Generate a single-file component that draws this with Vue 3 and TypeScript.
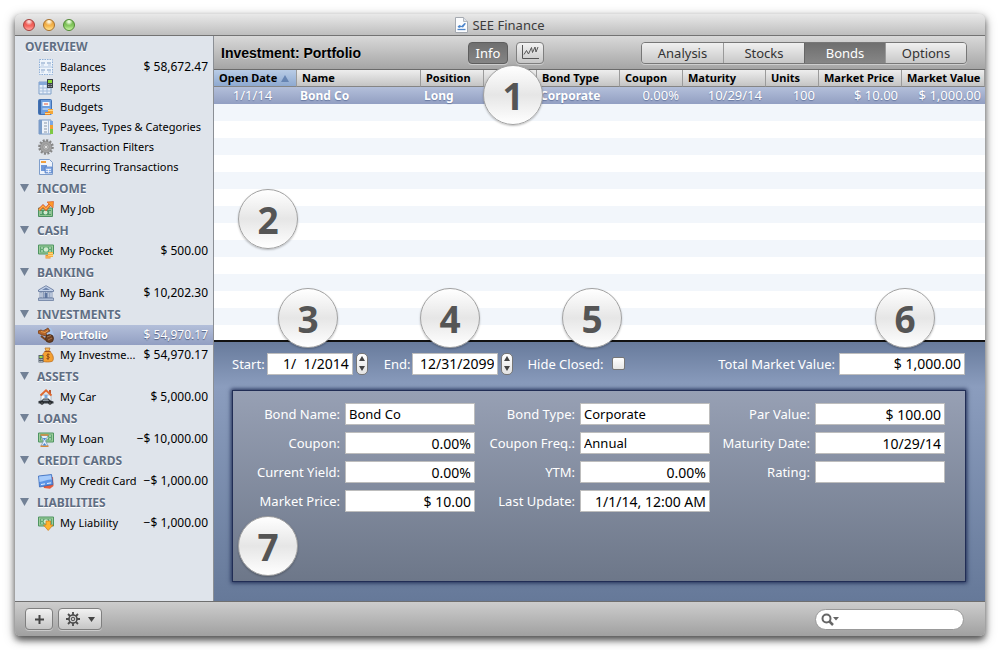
<script setup lang="ts">
import { ref } from 'vue'

interface Item { id: string; name: string; value?: string; icon: string }
interface Section { title: string; items: Item[] }
interface Field { id: string; label: string; value: string; left?: boolean }

const sections: Section[] = [
  { title: 'OVERVIEW', items: [
    { id: 'balances', name: 'Balances', value: '$ 58,672.47', icon: 'balances' },
    { id: 'reports', name: 'Reports', icon: 'reports' },
    { id: 'budgets', name: 'Budgets', icon: 'budgets' },
    { id: 'payees', name: 'Payees, Types & Categories', icon: 'payees' },
    { id: 'filters', name: 'Transaction Filters', icon: 'gear' },
    { id: 'recurring', name: 'Recurring Transactions', icon: 'recurring' },
  ] },
  { title: 'INCOME', items: [{ id: 'job', name: 'My Job', icon: 'job' }] },
  { title: 'CASH', items: [{ id: 'pocket', name: 'My Pocket', value: '$ 500.00', icon: 'pocket' }] },
  { title: 'BANKING', items: [{ id: 'bank', name: 'My Bank', value: '$ 10,202.30', icon: 'bank' }] },
  { title: 'INVESTMENTS', items: [
    { id: 'portfolio', name: 'Portfolio', value: '$ 54,970.17', icon: 'portfolio' },
    { id: 'investment', name: 'My Investme...', value: '$ 54,970.17', icon: 'investment' },
  ] },
  { title: 'ASSETS', items: [{ id: 'car', name: 'My Car', value: '$ 5,000.00', icon: 'car' }] },
  { title: 'LOANS', items: [{ id: 'loan', name: 'My Loan', value: '−$ 10,000.00', icon: 'loan' }] },
  { title: 'CREDIT CARDS', items: [{ id: 'credit', name: 'My Credit Card', value: '−$ 1,000.00', icon: 'credit' }] },
  { title: 'LIABILITIES', items: [{ id: 'liability', name: 'My Liability', value: '−$ 1,000.00', icon: 'liability' }] },
]

const tabs = ['Analysis', 'Stocks', 'Bonds', 'Options']
const columns = ['Open Date', 'Name', 'Position', '', 'Bond Type', 'Coupon', 'Maturity', 'Units', 'Market Price', 'Market Value']

const fields: Field[] = [
  { id: 'bond-name', label: 'Bond Name:', value: 'Bond Co', left: true },
  { id: 'bond-type', label: 'Bond Type:', value: 'Corporate', left: true },
  { id: 'par-value', label: 'Par Value:', value: '$ 100.00' },
  { id: 'coupon', label: 'Coupon:', value: '0.00%' },
  { id: 'coupon-freq', label: 'Coupon Freq.:', value: 'Annual', left: true },
  { id: 'maturity-date', label: 'Maturity Date:', value: '10/29/14' },
  { id: 'current-yield', label: 'Current Yield:', value: '0.00%' },
  { id: 'ytm', label: 'YTM:', value: '0.00%' },
  { id: 'rating', label: 'Rating:', value: '' },
  { id: 'market-price', label: 'Market Price:', value: '$ 10.00' },
  { id: 'last-update', label: 'Last Update:', value: '1/1/14, 12:00 AM' },
]

const selected = ref('portfolio')
const tab = ref('Bonds')
const start = ref('1/  1/2014')
const end = ref('12/31/2099')
const hideClosed = ref(false)
const query = ref('')
</script>

<template>
  <svg class="defs" aria-hidden="true">
    <symbol id="i-balances" viewBox="0 0 16 16">
      <path d="M1.5 .5h13v15h-13z" fill="#eef4fb" stroke="#8eb0d8" stroke-dasharray="1.5 1" />
      <path d="M3 4h4M9 4h4M3 11h4M9 11h4" stroke="#7f9cc4" stroke-width="1.2" />
      <path d="M3 6h3M10 6h3M3 13h3M10 13h3M2 8h12" stroke="#b4c8e2" />
    </symbol>
    <symbol id="i-reports" viewBox="0 0 16 16">
      <path d="M1 3h12v12H1z" fill="#e8f0fa" stroke="#7f9fc8" />
      <path d="M1 3h12v3H1z" fill="#86a9d8" />
      <path d="M1.500 9h11M1.500 12h11M5 6v9M9 6v9" stroke="#a3bcdc" />
      <path d="M9 0h6v9H9z" fill="#3c4248" /><path d="M10 1h4v3h-4z" fill="#8fdc3a" />
      <path d="M10 5.500h4M10 7.500h4" stroke="#9aa0a6" stroke-dasharray="1 .5" />
    </symbol>
    <symbol id="i-budgets" viewBox="0 0 16 16">
      <rect x=".5" y=".5" width="13" height="15" rx="1" fill="#6f9fe0" stroke="#4272b4" />
      <path d="M1 1h2v14H1z" fill="#3c68a8" /><path d="M4.500 3h7v4h-7z" fill="#f4f7fb" />
      <path d="M6 5h4" stroke="#e2583c" /><path d="M4.500 9h7v2h-7z" fill="#a9c7f0" />
      <path d="M10 10h5v5h-5z" fill="#f3a73a" /><path d="M7 13h5v3H7z" fill="#e8872a" />
      <path d="M10 11.500h5M7 14.500h5" stroke="#ffd98a" />
    </symbol>
    <symbol id="i-payees" viewBox="0 0 16 16">
      <path d="M1 1h12v14H1z" fill="#eef3fa" stroke="#7c9bc6" /><path d="M1 1h3v14H1z" fill="#7a9cc9" />
      <path d="M6 4h3M6 7h3M6 10h3M6 13h3" stroke="#8a97a8" stroke-width="1.2" /><path d="M10.500 1v14" stroke="#a9bdd8" />
      <path d="M12 2h3v4h-3z" fill="#79a7e4" /><path d="M12 6h3v4h-3z" fill="#f3a030" /><path d="M12 10h3v5h-3z" fill="#7ec844" />
    </symbol>
    <symbol id="i-gear" viewBox="0 0 16 16">
      <circle cx="8" cy="8" r="6.600" fill="none" stroke="#858585" stroke-width="2.400" stroke-dasharray="2 1.450" />
      <circle cx="8" cy="8" r="5.800" fill="#a2a2a2" stroke="#7c7c7c" stroke-width=".6" />
      <circle cx="8" cy="8" r="3.200" fill="#b9b9b9" stroke="#8b8b8b" stroke-width=".7" />
      <circle cx="8" cy="8" r="1.500" fill="#f3f3f3" stroke="#777" stroke-width=".5" />
    </symbol>
    <symbol id="i-recurring" viewBox="0 0 16 16">
      <path d="M1.500 .5h10l3 3v12h-13z" fill="#eef3fb" stroke="#7f9ecb" />
      <path d="M3 2h5v2H3z" fill="#f0a040" /><path d="M3 6h6v6H3z" fill="#6e97d8" /><path d="M7 8h7v6H7z" fill="#8eb1e8" stroke="#4d7ac2" stroke-width=".7" />
      <path d="M8 10.500h5M8 12.500h5M10.500 10v4" stroke="#fff" stroke-width=".7" />
    </symbol>
    <symbol id="i-note" viewBox="0 0 16 16">
      <path d="M.5 2h15v9H.5z" fill="#9fce9b" stroke="#4e9462" /><path d="M2 3.500h12v6H2z" fill="#5fa772" />
      <circle cx="8" cy="6.500" r="2.300" fill="#d3ebd0" /><path d="M3 5h2M3 8h2M11 5h2M11 8h2" stroke="#d8efd4" />
    </symbol>
    <symbol id="i-job" viewBox="0 0 16 16">
      <path d="M.5 7h14v8.500H.5z" fill="#8fc48f" stroke="#4d9162" /><path d="M2 9h11v5H2z" fill="#4f9a66" />
      <circle cx="7.500" cy="11.500" r="2" fill="#d3ebd0" /><path d="M3 10v3M12 10v3" stroke="#d8efd4" />
      <path d="M1 9l4-4 3 3 4.500-5" fill="none" stroke="#d7512b" stroke-width="3" /><path d="M1 9l4-4 3 3 4.500-5" fill="none" stroke="#ffb340" stroke-width="1.400" />
      <path d="M9 1l6.500-.5L15 7z" fill="#ff9a2c" stroke="#d9602a" stroke-width=".7" />
    </symbol>
    <symbol id="i-pocket" viewBox="0 0 16 16">
      <use href="#i-note" /><path d="M10 9h5v5h-5z" fill="#f6b13d" /><path d="M7.500 12h5v3.500h-5z" fill="#ee8f2b" /><path d="M10 10.500h5M10 12.500h5M7.500 14h5" stroke="#ffdc8c" stroke-width=".8" />
    </symbol>
    <symbol id="i-bank" viewBox="0 0 16 16">
      <path d="M8 .7L15.500 5v1.500H.5V5z" fill="#c5d3e9" stroke="#5d7197" stroke-width=".8" /><path d="M8 2.500L12 5H4z" fill="#6f86ae" />
      <path d="M2 7h2v6H2zM5.500 7h2v6h-2zM9 7h2v6H9zM12 7h2v6h-2z" fill="#dfe8f5" stroke="#6b7fa4" stroke-width=".7" />
      <path d="M6.500 8h3v5.500h-3z" fill="#5f769f" /><path d="M.5 13h15v2.500H.5z" fill="#aebdd6" stroke="#5d7197" stroke-width=".7" />
    </symbol>
    <symbol id="i-portfolio" viewBox="0 0 16 16">
      <path d="M6 1l7 0 3 7-3 3-6-4z" fill="#a9c3e8" />
      <path d="M0 4l3-1 2 1 5-3 2 3-4 2 1 3-5-1-4-2z" fill="#b4652a" stroke="#6a3714" stroke-width=".7" /><path d="M3 4.500l4 1 3-2" stroke="#e59a4c" fill="none" />
      <path d="M3 9l5 4" stroke="#7a431b" stroke-width="2" /><ellipse cx="11.500" cy="11.500" rx="4" ry="4" fill="#6b3f22" stroke="#3f220e" stroke-width=".7" /><path d="M9 10l4-1.500M10 13l4-2" stroke="#a87347" />
    </symbol>
    <symbol id="i-investment" viewBox="0 0 16 16">
      <path d="M7 1h5l-1 3h-3z" fill="#f6bd62" stroke="#b66a1d" stroke-width=".7" /><path d="M7 4.500h5c3 3 4 6 3 9-1 2-10 2-11 0-.5-3 0-6 3-9z" fill="#f3a033" stroke="#b9691b" stroke-width=".7" />
      <path d="M6.500 4.500h6" stroke="#a04c1b" /><path d="M11.500 7.500c-3-1-3.500 1.800-1.500 2s1.800 2.600-1.500 2M10 6.500v6.500" fill="none" stroke="#8b4513" stroke-width=".9" />
      <path d="M.5 8h5v7.500H.5z" fill="#55606c" /><path d="M1.500 9h3v2h-3z" fill="#9bdb48" /><path d="M1.500 12.500h3M1.500 14.500h3" stroke="#e5e8eb" stroke-dasharray=".8 .5" />
    </symbol>
    <symbol id="i-car" viewBox="0 0 16 16">
      <path d="M3 6h10v6H3z" fill="#f5f7fa" stroke="#99a3b0" stroke-width=".7" /><path d="M11 1h2v4h-2z" fill="#b75a35" />
      <path d="M2.500 6.500L8 1.300l5.500 5.200" fill="none" stroke="#e0682f" stroke-width="1.800" /><path d="M6.500 6h3v3h-3z" fill="#76a5dc" />
      <path d="M.5 12l3-.5 2-2h5l2 2 3 1v2H.5z" fill="#33383e" /><path d="M5.500 10.500h4.500l1 1.200H4.500z" fill="#aeb8c4" /><circle cx="4" cy="14" r="1.700" fill="#15181b" /><circle cx="12" cy="14" r="1.700" fill="#15181b" /><path d="M3.500 14h1M11.500 14h1" stroke="#ccc" />
    </symbol>
    <symbol id="i-loan" viewBox="0 0 16 16">
      <use href="#i-note" /><path d="M3 4.500h7L7.500 10l2.500 5H3l2.500-5z" fill="#e5f0fb" stroke="#6e8fb8" stroke-width=".7" />
      <path d="M2.500 4h8M2.500 15.300h8" stroke="#d78a3a" stroke-width="1.400" /><path d="M4.800 7h3.400L6.500 9.500zM4.500 14.500l2-2.500 2 2.500z" fill="#4b8bd3" />
    </symbol>
    <symbol id="i-credit" viewBox="0 0 16 16">
      <path d="M3 6l12-2 .5 9L12 15.700 6 15z" fill="#e65c3b" /><path d="M.5 3l13-1.500 1.500 10L1.500 14z" fill="#5c94e6" stroke="#2f62b5" stroke-width=".7" />
      <path d="M1 3.500l12-1.300.7 4.500C9 6 5 9 1.500 9z" fill="#a6cbfb" /><path d="M3 11.500l4-.6M9 10.500l4-.6" stroke="#e8f2ff" />
    </symbol>
    <symbol id="i-liability" viewBox="0 0 16 16">
      <use href="#i-note" /><path d="M8 6h4.500v4H15l-4.800 5.500L5.500 10H8z" fill="#ffb42e" stroke="#cf7a1c" stroke-width=".7" />
    </symbol>
  </svg>

  <div class="desk">
    <div class="window">
      <header class="titlebar">
        <div class="lights">
          <button class="light red" type="button" aria-label="Close"></button>
          <button class="light amber" type="button" aria-label="Minimize"></button>
          <button class="light green" type="button" aria-label="Zoom"></button>
        </div>
        <svg class="doc" viewBox="0 0 13 16" aria-hidden="true">
          <path d="M.5 .5h8l4 4v11H.5z" fill="#fbfcfe" stroke="#a4a9b0" /><path d="M8.500 .5v4h4" fill="#dde2ea" stroke="#a4a9b0" stroke-width=".8" />
          <path d="M2.500 9.500l2-1.500 2 1 3-3 1.500.5-3 4-2-.5-2 1z" fill="#4d86cc" /><path d="M2.500 12.500h8" stroke="#4d86cc" stroke-width="1.300" />
        </svg>
        <h1>SEE Finance</h1>
      </header>

      <div class="body">
        <nav class="sidebar">
          <section v-for="(s, i) in sections" :key="s.title">
            <h2 :class="{ first: i === 0 }">
              <svg v-if="i > 0" class="tri" viewBox="0 0 9 8" aria-hidden="true"><path d="M0 0h9L4.500 8z" fill="#728196" /></svg>
              {{ s.title }}
            </h2>
            <button v-for="it in s.items" :key="it.id" type="button" class="item" :class="{ on: selected === it.id }" @click="selected = it.id">
              <svg class="icon" aria-hidden="true"><use :href="'#i-' + it.icon" /></svg>
              <span class="name">{{ it.name }}</span>
              <span v-if="it.value" class="amount">{{ it.value }}</span>
            </button>
          </section>
        </nav>

        <main class="main">
          <div class="toolbar">
            <h2>Investment: Portfolio</h2>
            <div class="modes">
              <button type="button" class="btn pressed">Info</button>
              <button type="button" class="btn chart" aria-label="Chart">
                <svg viewBox="0 0 18 15" aria-hidden="true"><path d="M1.500 0v13.500H18" fill="none" stroke="#555" /><path d="M3 9.500l2.500-4 2 3.500 3-6.500 1 5 2.500-5.500 1 5L17 2" fill="none" stroke="#555" /></svg>
              </button>
            </div>
            <div class="segments">
              <button v-for="t in tabs" :key="t" type="button" :class="{ on: tab === t }" @click="tab = t">{{ t }}</button>
            </div>
          </div>

          <div class="list">
            <table>
              <colgroup>
                <col class="c83"><col><col class="c63"><col class="c53"><col class="c83"><col class="c63"><col class="c83"><col class="c53"><col class="c83"><col class="c83">
              </colgroup>
              <thead>
                <tr>
                  <th v-for="(c, i) in columns" :key="i" scope="col" :class="{ sorted: i === 0 }">{{ c }}<svg v-if="i === 0" viewBox="0 0 8 7" aria-hidden="true"><path d="M0 7h8L4 0z" fill="#6785b3" /></svg></th>
                </tr>
              </thead>
              <tbody>
                <tr>
                  <td class="center">1/1/14</td><td class="strong">Bond Co</td><td class="strong">Long</td><td></td><td class="strong">Corporate</td>
                  <td class="num">0.00%</td><td class="num">10/29/14</td><td class="num">100</td><td class="num">$ 10.00</td><td class="num">$ 1,000.00</td>
                </tr>
              </tbody>
            </table>
          </div>

          <div class="details">
            <div class="filters">
              <label for="start">Start:</label>
              <input id="start" v-model="start" class="date" type="text">
              <span class="stepper">
                <button type="button" aria-label="Later start"><svg viewBox="0 0 6 5"><path d="M0 5h6L3 0z" /></svg></button>
                <button type="button" aria-label="Earlier start"><svg viewBox="0 0 6 5"><path d="M0 0h6L3 5z" /></svg></button>
              </span>
              <label for="end" class="end">End:</label>
              <input id="end" v-model="end" class="date" type="text">
              <span class="stepper">
                <button type="button" aria-label="Later end"><svg viewBox="0 0 6 5"><path d="M0 5h6L3 0z" /></svg></button>
                <button type="button" aria-label="Earlier end"><svg viewBox="0 0 6 5"><path d="M0 0h6L3 5z" /></svg></button>
              </span>
              <label for="hide" class="hide">Hide Closed:</label>
              <input id="hide" v-model="hideClosed" type="checkbox">
              <label for="total" class="total-label">Total Market Value:</label>
              <input id="total" class="total" type="text" value="$ 1,000.00" readonly>
            </div>
            <form class="panel" @submit.prevent>
              <template v-for="f in fields" :key="f.id">
                <label :for="f.id">{{ f.label }}</label>
                <input :id="f.id" type="text" :class="{ left: f.left }" :value="f.value">
              </template>
            </form>
          </div>
        </main>
      </div>

      <footer class="bottombar">
        <button type="button" class="btn plus" aria-label="Add"><svg viewBox="0 0 9 9"><path d="M4.500 0v9M0 4.500h9" stroke="#444" stroke-width="2" /></svg></button>
        <button type="button" class="btn action" aria-label="Actions">
          <svg class="cog" viewBox="0 0 14 14"><g stroke="#4c4c4c" stroke-width="1.800"><path d="M7 0v14M0 7h14M2 2l10 10M12 2L2 12" /></g><circle cx="7" cy="7" r="4" fill="#dcdcdc" stroke="#4c4c4c" stroke-width="1.600" /><circle cx="7" cy="7" r="1.800" fill="#c8c8c8" stroke="#4c4c4c" /></svg>
          <svg class="down" viewBox="0 0 7 5"><path d="M0 0h7L3.500 5z" fill="#444" /></svg>
        </button>
        <div class="search">
          <svg viewBox="0 0 18 13" aria-hidden="true"><circle cx="5.500" cy="5.500" r="4" fill="none" stroke="#666" stroke-width="2" /><path d="M8.500 8.500l3.500 3.500" stroke="#666" stroke-width="2.500" /><path d="M12 4h6l-3 3.500z" fill="#666" /></svg>
          <input v-model="query" type="search" aria-label="Search">
        </div>
      </footer>

      <span class="badge b1">1</span>
      <span class="badge b2">2</span>
      <span class="badge b3">3</span>
      <span class="badge b4">4</span>
      <span class="badge b5">5</span>
      <span class="badge b6">6</span>
      <span class="badge b7">7</span>
    </div>
  </div>
</template>

<style>
body { margin: 0; background: #fff; }
</style>

<style scoped>
.defs { display: none; }
.desk { box-sizing: border-box; min-height: 100vh; padding: 14px 15px; display: flex; font-family: "Noto Sans", "Open Sans", sans-serif; font-size: 12px; color: #000; }
.window { position: relative; flex: 1; min-width: 0; display: flex; flex-direction: column; border-radius: 5px; box-shadow: 0 4px 6px rgba(0, 0, 0, .55), 0 3px 12px rgba(0, 0, 0, .35); background: #ccc; }
button, input { font: inherit; color: inherit; box-sizing: border-box; margin: 0; padding: 0; border: 0; outline: 0; }
h1, h2 { margin: 0; font-weight: normal; }

.titlebar { position: relative; height: 22px; box-sizing: border-box; display: flex; align-items: center; justify-content: center; gap: 4px; border-bottom: 1px solid #737373; border-radius: 5px 5px 0 0; background: linear-gradient(#e9e9e9, #bebebe); }
.titlebar h1 { font-size: 13px; line-height: 20px; color: #3c3c3c; }
.doc { width: 13px; height: 16px; }
.lights { position: absolute; left: 8px; top: 5px; display: flex; gap: 8px; }
.light { width: 12px; height: 12px; border-radius: 50%; border: 1px solid; }
.red { border-color: #a5403c; background: radial-gradient(circle at 50% 15%, #fbd5d2 10%, transparent 40%), linear-gradient(#e0504b, #f6665f 60%, #ffaaa5); }
.amber { border-color: #a8702a; background: radial-gradient(circle at 50% 15%, #fff3d5 10%, transparent 40%), linear-gradient(#e29a35, #f6b74f 60%, #ffe695); }
.green { border-color: #4f8a33; background: radial-gradient(circle at 50% 15%, #e8fbd8 10%, transparent 40%), linear-gradient(#66ad45, #8acb63 60%, #c9f5a5); }

.body { flex: 1; display: flex; min-height: 0; }
.sidebar { width: 199px; flex: none; box-sizing: border-box; background: #dfe4eb; border-right: 1px solid #8b8f95; }
.sidebar h2 { display: flex; align-items: center; height: 22px; padding-left: 5px; gap: 8px; font-size: 12px; font-weight: bold; color: #5f6e83; text-shadow: 0 1px 0 #fff; }
.sidebar h2.first { height: 21px; padding-left: 10px; }
.tri { width: 9px; height: 8px; }
.item { display: flex; align-items: center; width: 100%; height: 20px; padding: 0 5px 0 23px; background: none; white-space: nowrap; text-align: left; line-height: 16px; }
.item.on { color: #fff; background: linear-gradient(#b3bfda, #929fc2); text-shadow: 0 1px 1px #4d5a7c; }
.item.on .name { font-weight: bold; }
.icon { width: 16px; height: 16px; flex: none; margin-right: 6px; }
.name { font-size: 11px; }
.amount { margin-left: auto; font-size: 12px; }

.main { flex: 1; min-width: 0; display: flex; flex-direction: column; }
.toolbar { display: flex; justify-content: space-between; align-items: center; height: 34px; box-sizing: border-box; padding: 0 18px 0 7px; background: linear-gradient(#d9d9d9, #a5a5a5); border-bottom: 1px solid #6b6b6b; }
.toolbar h2 { font-family: "Liberation Sans", Arial, sans-serif; font-size: 14px; font-weight: bold; white-space: nowrap; text-shadow: 0 1px 0 #ddd; }
.modes { display: flex; gap: 8px; margin-left: 10px; }
.btn { display: flex; align-items: center; justify-content: center; height: 22px; border: 1px solid #7f7f7f; border-radius: 4px; background: linear-gradient(#f2f2f2, #c6c6c6); box-shadow: 0 1px 0 rgba(255, 255, 255, .4); }
.pressed { width: 40px; font-size: 13px; color: #fff; background: linear-gradient(#6f6f6f, #858585); border-color: #5e5e5e; }
.chart { width: 28px; }
.chart svg { width: 18px; height: 15px; }
.segments { display: flex; border: 1px solid #777; border-radius: 4px; overflow: hidden; box-shadow: 0 1px 0 rgba(255, 255, 255, .4); }
.segments button { width: 81px; height: 20px; font-size: 13px; line-height: 18px; color: #333; background: linear-gradient(#f0f0f0, #c8c8c8); }
.segments button + button { border-left: 1px solid #999; }
.segments button.on { color: #fff; background: linear-gradient(#6f6f6f, #868686); border-color: #666; }

.list { flex: 1; background: repeating-linear-gradient(#f2f6fb 0 17px, #fff 17px 34px); }
table { width: 100%; table-layout: fixed; border-collapse: separate; border-spacing: 0; }
.c83 { width: 83px; }
.c63 { width: 63px; }
.c53 { width: 53px; }
th { box-sizing: border-box; height: 17px; padding: 0 0 0 5px; font-size: 11px; line-height: 16px; font-weight: bold; text-align: left; white-space: nowrap; border-right: 1px solid #9b9b9b; border-bottom: 1px solid #858585; background: linear-gradient(#eee, #c4c4c4); }
th.sorted { background: linear-gradient(#b9cce6, #8ea9d0); }
th svg { width: 8px; height: 7px; margin-left: 4px; }
td { box-sizing: border-box; height: 17px; padding: 0 4px; font-size: 13px; line-height: 17px; white-space: nowrap; color: #fff; background: linear-gradient(#b3bfda, #929fc2); text-shadow: 0 1px 1px #6878a0; }
td.center { text-align: center; padding-right: 10px; }
td.strong { font-size: 12px; font-weight: bold; padding-left: 3px; }
td.num { text-align: right; }

.details { box-sizing: border-box; padding: 10px 20px 20px 18px; border-top: 2px solid #111; background: linear-gradient(#687b9c, #8b9dbe 45px, #667999); color: #fff; font-size: 13px; }
.details label { white-space: nowrap; }
.filters { display: flex; align-items: center; height: 23px; }
.details input[type="text"] { color: #000; background: #fff; border: 1px solid #bdbdbd; height: 22px; padding: 0 3px; text-align: right; font-size: 14px; min-width: 0; }
.details input[type="text"].left { text-align: left; font-size: 13px; }
.filters .date { width: 86px; margin-left: 2px; white-space: pre; }
.stepper { display: flex; flex-direction: column; width: 12px; height: 22px; margin-left: 3px; box-sizing: border-box; border: 1px solid #777; border-radius: 5px; overflow: hidden; background: linear-gradient(#fff, #e3e3e3); }
.stepper button { flex: 1; background: none; display: flex; align-items: center; justify-content: center; }
.stepper svg { width: 6px; height: 5px; fill: #444; }
.filters .end { margin-left: 16px; }
.filters .hide { margin-left: 14px; }
input[type="checkbox"] { appearance: none; width: 13px; height: 13px; margin-left: 8px; border: 1px solid #777; border-radius: 2px; background: linear-gradient(#fff, #e6e6e6); }
.total-label { margin-left: auto; }
.details .total { width: 126px; margin-left: 4px; }
.panel { display: grid; grid-template-columns: 1fr 130px 1fr 130px 1fr 130px; grid-auto-rows: 22px; gap: 7px 5px; align-content: start; align-items: center; box-sizing: border-box; min-height: 190px; margin: 16px 0 0 1px; padding: 12px 20px 12px 12px; background: linear-gradient(#97a0b4, #6d7789); box-shadow: 0 0 4px 2px #1f2c55, 0 0 0 1px #2a3658; }
.panel label { text-align: right; }

.bottombar { height: 35px; box-sizing: border-box; display: flex; align-items: center; gap: 5px; padding: 0 21px 0 10px; border-top: 1px solid #6f6f6f; border-radius: 0 0 5px 5px; background: linear-gradient(#cdcdcd, #a0a0a0); }
.plus { width: 28px; }
.plus svg { width: 9px; height: 9px; }
.action { width: 44px; gap: 8px; }
.cog { width: 14px; height: 14px; }
.down { width: 7px; height: 5px; }
.search { margin-left: auto; display: flex; align-items: center; width: 149px; height: 21px; box-sizing: border-box; padding: 0 5px; border: 1px solid #999; border-radius: 11px; background: #fff; }
.search svg { width: 18px; height: 13px; flex: none; }
.search input { flex: 1; min-width: 0; background: none; }

.badge { position: absolute; width: 60px; height: 60px; box-sizing: border-box; display: flex; align-items: center; justify-content: center; border: 1px solid #a2a2a2; border-radius: 50%; background: linear-gradient(#fff, #e6e6e6 50%, #fff); box-shadow: 0 1px 2px rgba(0, 0, 0, .25); font-size: 37px; font-weight: bold; color: #555; }
.b1 { left: 468px; top: 51px; }
.b2 { left: 223px; top: 175px; }
.b3 { left: 263px; bottom: 288px; }
.b4 { left: 405px; bottom: 288px; }
.b5 { left: 547px; bottom: 288px; }
.b6 { right: 50px; bottom: 288px; }
.b7 { left: 223px; bottom: 60px; }
</style>
